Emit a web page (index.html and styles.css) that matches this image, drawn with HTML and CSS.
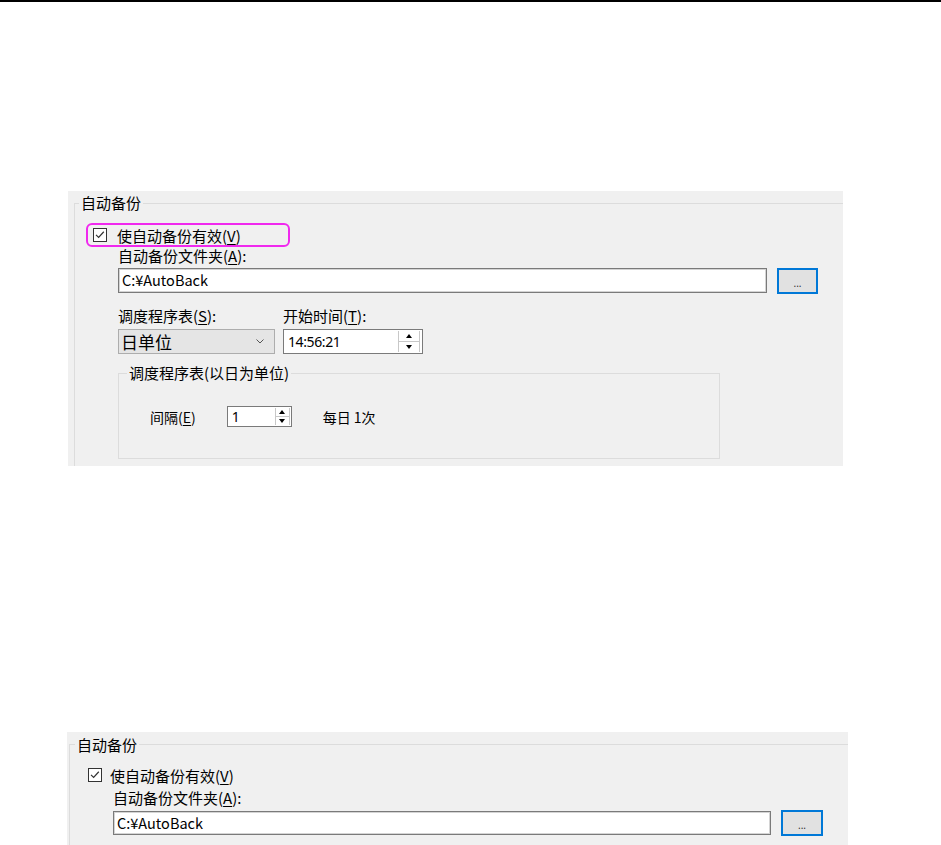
FILE: index.html
```html
<!DOCTYPE html>
<html lang="zh-CN">
<head>
<meta charset="utf-8">
<title>自动备份</title>
<link rel="stylesheet" href="styles.css">
</head>
<body>
<div class="topline"></div>

<section class="panel p1">
  <div class="group">
    <div class="group-title">自动备份</div>
    <div class="check-row highlight">
      <span class="cbox"><svg viewBox="0 0 13 13" width="12" height="12"><path d="M2.2 6.4 L5 9.2 L10.6 3" fill="none" stroke="#333" stroke-width="1.3"/></svg></span>
      <span class="check-text">使自动备份有效(<span class="mn">V</span>)</span>
    </div>
    <div class="folder">
      <div class="label">自动备份文件夹(<span class="mn">A</span>):</div>
      <div class="path-row">
        <div class="textbox">C:¥AutoBack</div>
        <div class="browse">...</div>
      </div>
      <div class="sched-row">
        <div class="col">
          <div class="label">调度程序表(<span class="mn">S</span>):</div>
          <div class="combo"><span>日单位</span><svg class="chev" viewBox="0 0 8 5" width="8" height="5"><path d="M0.5 0.5 L4 4 L7.5 0.5" fill="none" stroke="#555" stroke-width="1"/></svg></div>
        </div>
        <div class="col">
          <div class="label">开始时间(<span class="mn">T</span>):</div>
          <div class="timebox">
            <span class="num">14:56:21</span>
            <div class="spin"><div class="half"><span class="up"></span></div><div class="half"><span class="down"></span></div></div>
          </div>
        </div>
      </div>
      <div class="inner-group">
        <div class="group-title">调度程序表(以日为单位)</div>
        <div class="interval-row">
          <span class="small">间隔(<span class="mn">E</span>)</span>
          <div class="spinbox">
            <span class="num">1</span>
            <div class="spin sm"><div class="half"><span class="up"></span></div><div class="half"><span class="down"></span></div></div>
          </div>
          <span class="small times">每日 1次</span>
        </div>
      </div>
    </div>
  </div>
</section>

<section class="panel p2">
  <div class="group">
    <div class="group-title">自动备份</div>
    <div class="check-row">
      <span class="cbox"><svg viewBox="0 0 13 13" width="12" height="12"><path d="M2.2 6.4 L5 9.2 L10.6 3" fill="none" stroke="#333" stroke-width="1.3"/></svg></span>
      <span class="check-text">使自动备份有效(<span class="mn">V</span>)</span>
    </div>
    <div class="folder">
      <div class="label">自动备份文件夹(<span class="mn">A</span>):</div>
      <div class="path-row">
        <div class="textbox">C:¥AutoBack</div>
        <div class="browse">...</div>
      </div>
    </div>
  </div>
</section>
</body>
</html>
```
FILE: styles.css
```css
html, body {
  margin: 0;
  padding: 0;
  background: #fff;
  height: 845px;
  overflow: hidden;
}
body {
  font-family: "Noto Sans CJK SC", "Noto Sans", sans-serif;
  font-size: 15px;
  color: #000;
}
.topline {
  height: 2px;
  background: #000;
}
.panel {
  background: #f0f0f0;
  box-sizing: border-box;
  overflow: hidden;
}
.p1 {
  margin: 189px 0 0 68px;
  width: 775px;
  height: 275px;
  padding: 12px 0 0 6px;
}
.p2 {
  margin: 266px 0 0 67px;
  width: 781px;
  height: 113px;
  padding: 12px 0 0 2px;
}
.group {
  border-top: 1px solid #dcdcdc;
  border-left: 1px solid #dcdcdc;
  min-height: 320px;
}
.group-title {
  width: fit-content;
  background: #f0f0f0;
  line-height: 20px;
  padding: 0 2px;
  white-space: nowrap;
}
.p1 .group > .group-title {
  margin: -11px 0 0 4px;
}
.p2 .group > .group-title {
  margin: -10px 0 0 5px;
}
.mn {
  text-decoration: underline;
  text-underline-offset: 2px;
}
.check-row {
  display: flex;
  align-items: center;
  height: 24px;
  box-sizing: border-box;
  white-space: nowrap;
}
.p1 .check-row {
  margin: 10px 0 0 11px;
  width: 204px;
  border: 2px solid #f028ee;
  border-radius: 6px;
  padding-left: 5px;
  gap: 10px;
}
.p2 .check-row {
  margin: 8px 0 0 18px;
  gap: 8px;
}
.cbox {
  width: 14px;
  height: 14px;
  box-sizing: border-box;
  border: 1px solid #333;
  background: #fff;
  display: flex;
  align-items: center;
  justify-content: center;
}
.folder {
  margin-left: 43px;
}
.label {
  line-height: 18px;
  white-space: nowrap;
}
.p2 .label {
  margin-top: 2px;
}
.path-row {
  display: flex;
  align-items: flex-start;
  gap: 10px;
  margin-top: 3px;
}
.p2 .path-row {
  margin-top: 4px;
}
.textbox {
  width: 649px;
  height: 25px;
  box-sizing: border-box;
  border: 1px solid #7a7a7a;
  box-shadow: inset 0 0 0 1px #d4d4d4;
  background: #fff;
  padding-left: 3px;
  line-height: 22px;
  font-size: 14.5px;
}
.p2 .textbox {
  width: 658px;
  height: 24px;
  line-height: 21px;
}
.browse {
  width: 41px;
  height: 26px;
  box-sizing: border-box;
  border: 2px solid #0078d7;
  background: #e1e1e1;
  display: flex;
  justify-content: center;
  align-items: center;
  font-family: "Noto Sans", sans-serif;
  font-size: 10px;
  line-height: 10px;
  color: #333;
  padding-top: 3px;
}
.p2 .browse {
  width: 42px;
  margin-top: -1px;
}
.sched-row {
  display: flex;
  gap: 8px;
  margin-top: 13px;
}
.combo {
  width: 157px;
  height: 25px;
  margin-top: 4px;
  box-sizing: border-box;
  background: #e5e5e5;
  border: 1px solid #adadad;
  display: flex;
  align-items: center;
  justify-content: space-between;
  padding: 0 10px 0 2px;
  font-size: 17px;
}
.timebox {
  width: 140px;
  height: 25px;
  margin-top: 4px;
  box-sizing: border-box;
  border: 1px solid #7a7a7a;
  background: #fff;
  display: flex;
  align-items: stretch;
  justify-content: space-between;
}
.num {
  font-family: "Noto Sans", sans-serif;
  font-size: 14px;
  letter-spacing: -0.4px;
  padding-left: 4px;
  display: flex;
  align-items: center;
}
.spin {
  width: 20px;
  margin: 1px 2px 1px 0;
  border-left: 1px solid #c8c8c8;
  border-right: 1px solid #c8c8c8;
  display: flex;
  flex-direction: column;
}
.spin.sm {
  width: 13px;
  margin-right: 1px;
}
.half {
  flex: 1;
  display: flex;
  align-items: center;
  justify-content: center;
}
.half + .half {
  border-top: 1px solid #c8c8c8;
}
.up {
  width: 0;
  height: 0;
  border-left: 3.5px solid transparent;
  border-right: 3.5px solid transparent;
  border-bottom: 4px solid #000;
}
.down {
  width: 0;
  height: 0;
  border-left: 3.5px solid transparent;
  border-right: 3.5px solid transparent;
  border-top: 4px solid #000;
}
.inner-group {
  margin-top: 19px;
  width: 602px;
  height: 86px;
  box-sizing: border-box;
  border: 1px solid #dcdcdc;
}
.inner-group .group-title {
  margin: -11px 0 0 8px;
}
.interval-row {
  display: flex;
  align-items: center;
  height: 21px;
  margin-top: 23px;
  padding-left: 31px;
}
.small {
  font-size: 14px;
  white-space: nowrap;
}
.spinbox {
  width: 65px;
  height: 21px;
  margin-left: 31px;
  box-sizing: border-box;
  border: 1px solid #7a7a7a;
  background: #fff;
  display: flex;
  align-items: stretch;
  justify-content: space-between;
}
.times {
  margin-left: 31px;
}
```
